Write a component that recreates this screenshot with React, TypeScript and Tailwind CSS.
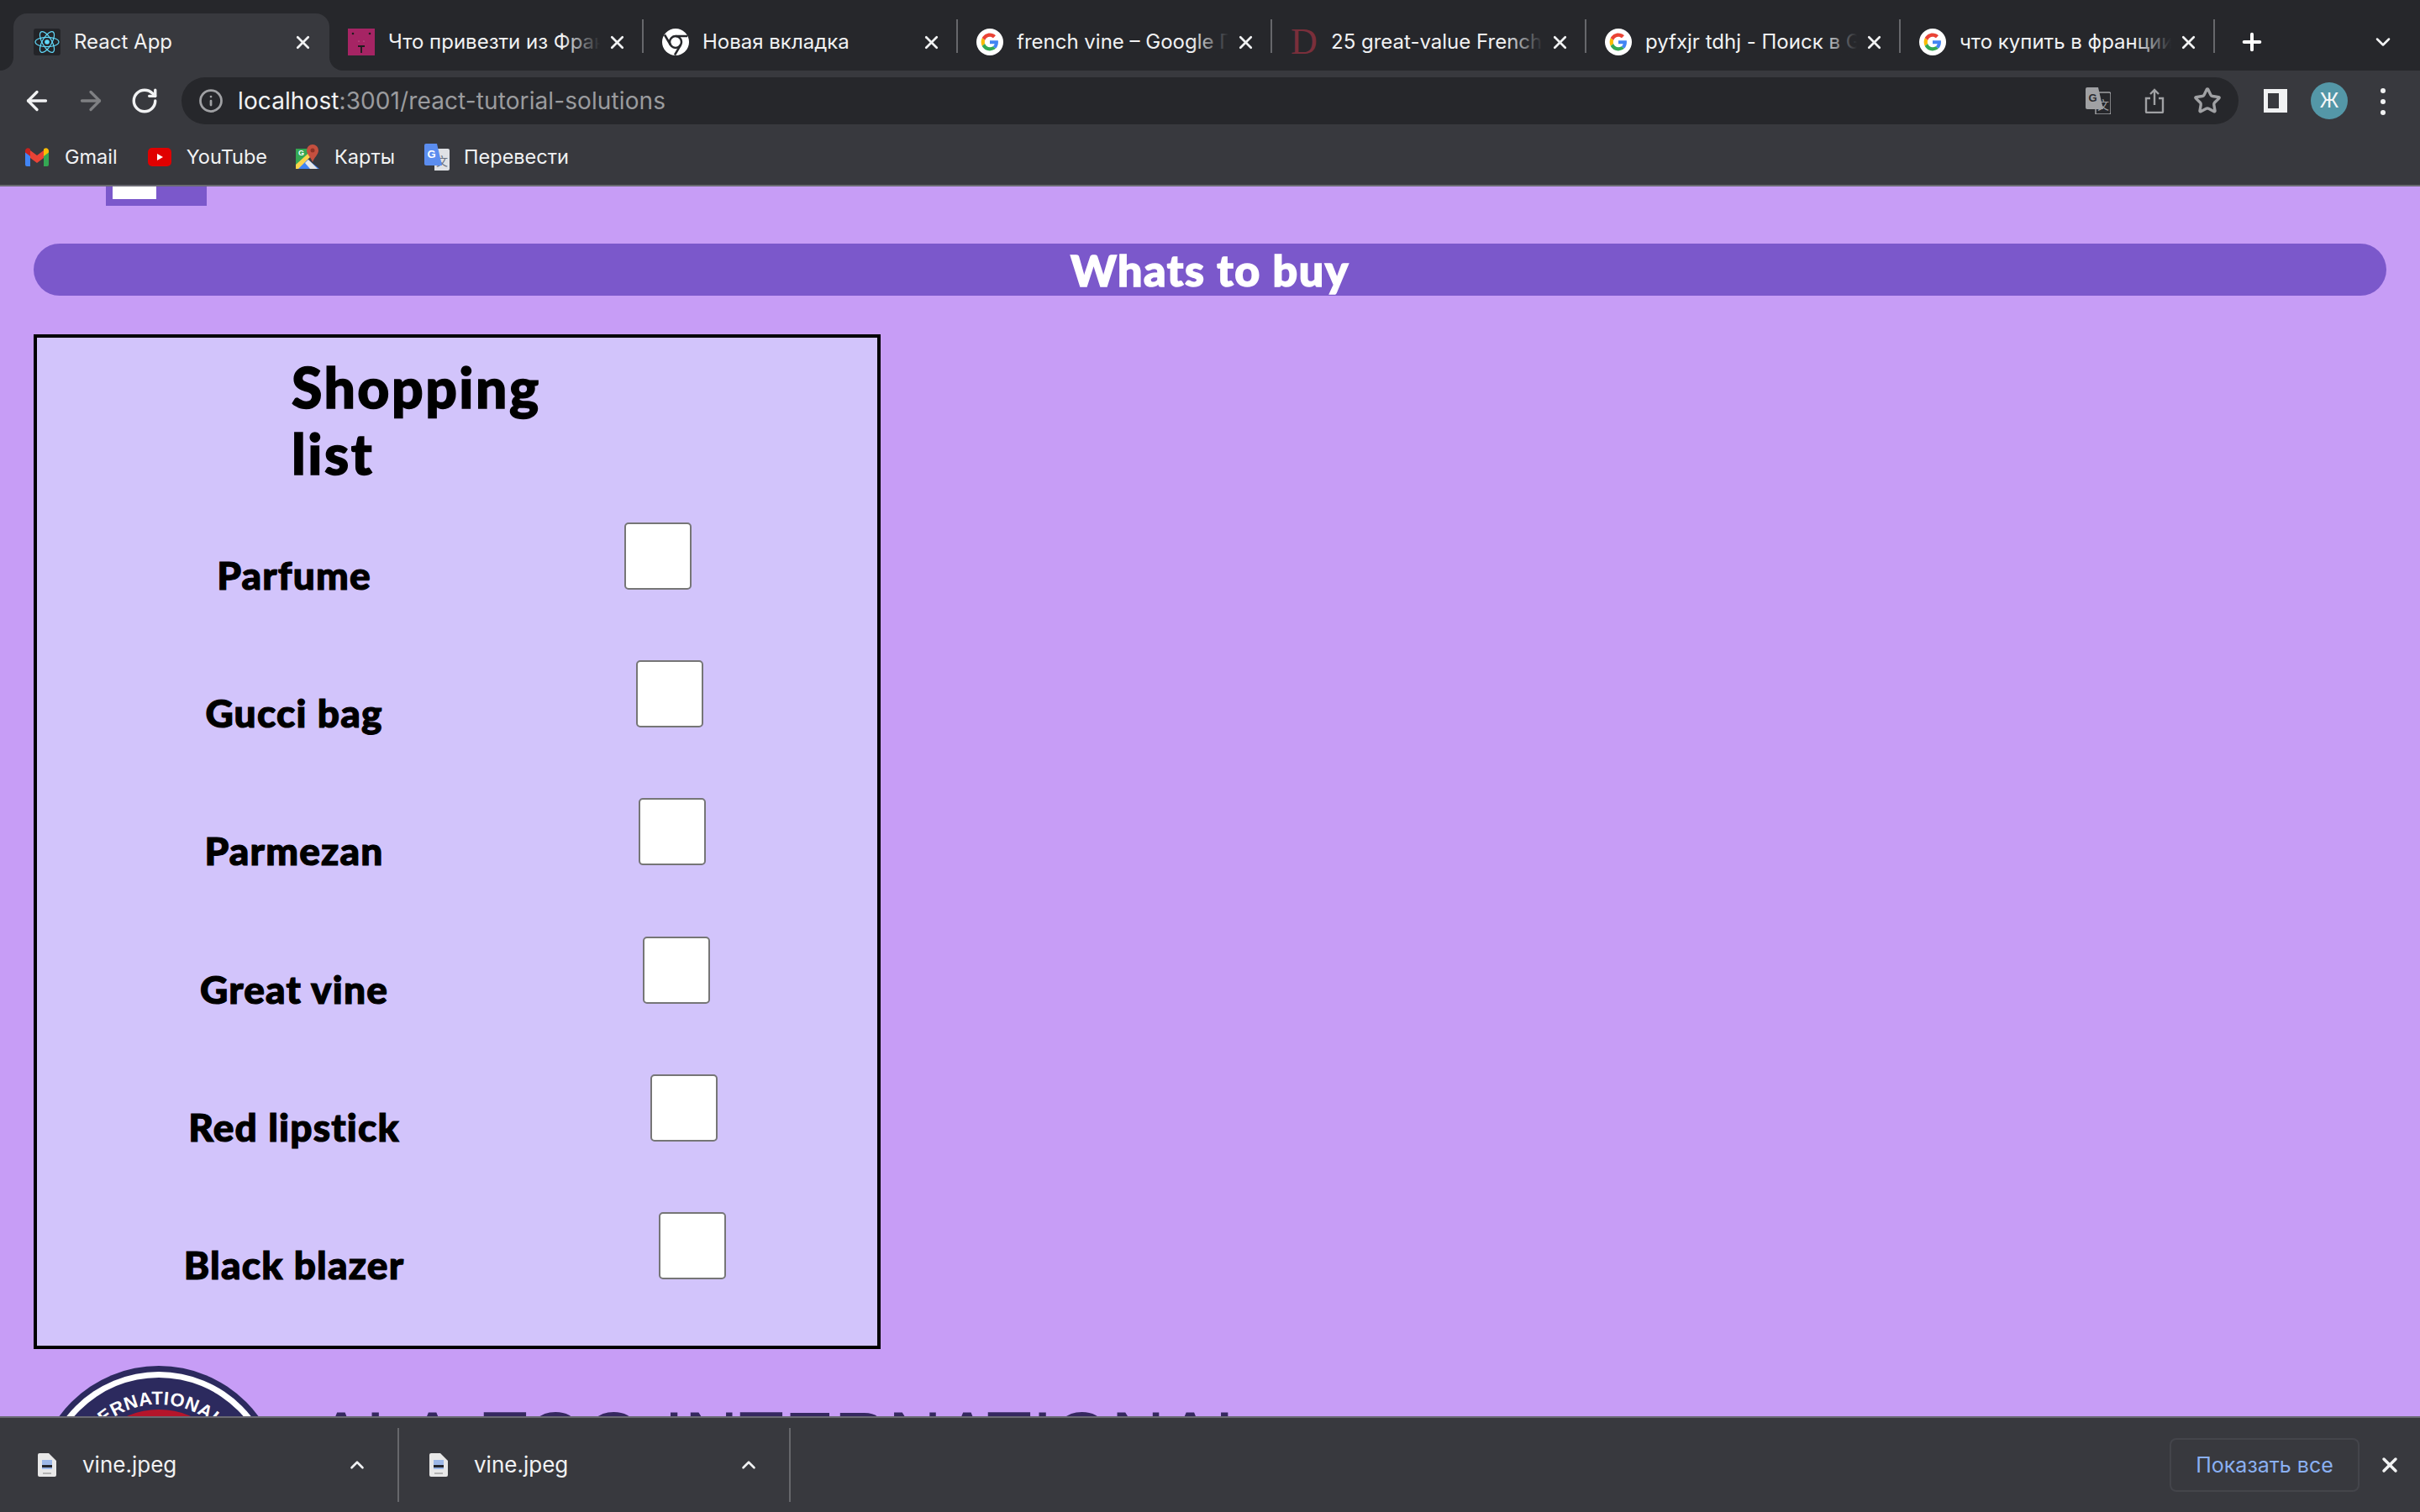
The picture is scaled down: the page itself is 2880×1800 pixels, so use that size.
import { ArrowLeft, ArrowRight, ChevronDown, ChevronUp, Info, Plus, RotateCw, Star, X } from "lucide-react";
import type { ReactNode } from "react";

function GoogleIcon() {
  return (
    <svg viewBox="0 0 32 32" className="w-8 h-8 shrink-0">
      <circle cx="16" cy="16" r="16" fill="#fff" />
      <g transform="translate(5.6 5.6) scale(0.433)">
        <path fill="#EA4335" d="M24 9.5c3.54 0 6.71 1.22 9.21 3.6l6.85-6.85C35.9 2.38 30.47 0 24 0 14.62 0 6.51 5.38 2.56 13.22l7.98 6.19C12.43 13.72 17.74 9.5 24 9.5z" />
        <path fill="#4285F4" d="M46.98 24.55c0-1.57-.15-3.09-.38-4.55H24v9.02h12.94c-.58 2.96-2.26 5.48-4.78 7.18l7.73 6c4.51-4.18 7.09-10.36 7.09-17.65z" />
        <path fill="#FBBC05" d="M10.53 28.59c-.48-1.45-.76-2.99-.76-4.59s.27-3.14.76-4.59l-7.98-6.19C.92 16.46 0 20.12 0 24c0 3.88.92 7.54 2.56 10.78l7.97-6.19z" />
        <path fill="#34A853" d="M24 48c6.48 0 11.93-2.13 15.89-5.81l-7.73-6c-2.15 1.45-4.92 2.3-8.16 2.3-6.26 0-11.57-4.22-13.47-9.91l-7.98 6.19C6.51 42.62 14.62 48 24 48z" />
      </g>
    </svg>
  );
}

function ReactIcon() {
  return (
    <svg viewBox="0 0 32 32" className="w-8 h-8 shrink-0">
      <rect width="32" height="32" rx="3" fill="#232428" />
      <g fill="none" stroke="#61dafb" strokeWidth="1.2">
        <ellipse cx="16" cy="16" rx="14" ry="5.6" />
        <ellipse cx="16" cy="16" rx="14" ry="5.6" transform="rotate(60 16 16)" />
        <ellipse cx="16" cy="16" rx="14" ry="5.6" transform="rotate(120 16 16)" />
      </g>
      <circle cx="16" cy="16" r="2.8" fill="#61dafb" />
    </svg>
  );
}

function PinkIcon() {
  return (
    <svg viewBox="0 0 32 32" className="w-8 h-8 shrink-0">
      <rect width="32" height="32" fill="#a62464" />
      <circle cx="6" cy="6" r="1.3" fill="#1d1d1d" />
      <circle cx="26" cy="6" r="1.3" fill="#1d1d1d" />
      <path d="M12 21h8M16 21v8" stroke="#1d1d1d" strokeWidth="1.8" fill="none" />
      <circle cx="13" cy="15" r="0.6" fill="#d98bb0" />
      <circle cx="19" cy="15" r="0.6" fill="#d98bb0" />
    </svg>
  );
}

function ChromeIcon() {
  return (
    <svg viewBox="0 0 32 32" className="w-8 h-8 shrink-0">
      <circle cx="16" cy="16" r="16" fill="#fff" />
      <circle cx="16" cy="16" r="7" fill="#fff" stroke="#26272b" strokeWidth="2.5" />
      <path d="M16 9h14M10 19.5 3 7.5M22 19.5l-7 12" stroke="#26272b" strokeWidth="2.5" fill="none" />
    </svg>
  );
}

function SerifIcon() {
  return (
    <span className="w-8 h-8 shrink-0 flex items-center justify-center font-['Liberation_Serif',serif] text-[44px] leading-none text-[#7a2f3b]">
      D
    </span>
  );
}

function GmailIcon() {
  return (
    <svg viewBox="0 0 28 22" className="w-7 h-[22px] shrink-0">
      <path d="M0 4v16a2 2 0 0 0 2 2h4V8z" fill="#4285f4" />
      <path d="M28 4v16a2 2 0 0 1-2 2h-4V8z" fill="#34a853" />
      <path d="M6 3v9l8 6 8-6V3l-8 6z" fill="#ea4335" />
      <path d="M0 3.5C0 .8 3 -.8 5 .8l1 .8V10L0 5.5z" fill="#c5221f" />
      <path d="M28 3.5c0-2.7-3-4.3-5-2.7l-1 .8V10l6-4.500z" fill="#fbbc04" />
    </svg>
  );
}

function YoutubeIcon() {
  return (
    <svg viewBox="0 0 28 22" className="w-7 h-[22px] shrink-0">
      <rect width="28" height="22" rx="5" fill="#e00000" />
      <path d="M11 7l7 4-7 4z" fill="#fff" />
    </svg>
  );
}

function MapsIcon() {
  return (
    <svg viewBox="0 0 28 30" className="w-7 h-[30px] shrink-0">
      <path d="M0 5h19v8L0 28z" fill="#34a853" />
      <path d="M0 28 12 16l16 13H1z" fill="#4285f4" />
      <path d="M0 24 21 5l3 3L3 29H0z" fill="#fbd44b" />
      <path d="M17 29 11 22l4-4 11 11z" fill="#e8e8e8" />
      <path d="M20 0a7 7 0 0 1 7 7c0 5-5 8-7 14-2-6-7-9-7-14a7 7 0 0 1 7-7z" fill="#c5503f" />
      <circle cx="20" cy="7" r="2.500" fill="#8f3226" />
      <text x="3" y="13" fontSize="9" fontWeight="700" fill="#fff" fontFamily="Liberation Sans">G</text>
    </svg>
  );
}

function TranslateIcon({ mono = false }: { mono?: boolean }) {
  return (
    <svg viewBox="0 0 30 32" className="w-[30px] h-8 shrink-0">
      <path d="M12 6h16a2 2 0 0 1 2 2v22a2 2 0 0 1-2 2H12z" fill={mono ? "none" : "#dfe1e5"} stroke={mono ? "#a0a1a4" : "none"} strokeWidth="1.500" />
      <text x="14" y="26" fontSize="14" fill={mono ? "#a0a1a4" : "#6b7280"} fontFamily="Noto Sans CJK SC">文</text>
      <path d="M2 0h13l6 26H2a2 2 0 0 1-2-2V2a2 2 0 0 1 2-2z" fill={mono ? "#a0a1a4" : "#5b8def"} />
      <text x="3.500" y="17" fontSize="13" fontWeight="700" fill={mono ? "#2a2b2f" : "#fff"} fontFamily="Liberation Sans">G</text>
    </svg>
  );
}

function FileIcon() {
  return (
    <svg viewBox="0 0 22 28" className="w-[22px] h-7 shrink-0">
      <path d="M2 0h11l9 9v17a2 2 0 0 1-2 2H2a2 2 0 0 1-2-2V2a2 2 0 0 1 2-2z" fill="#e8e8e8" />
      <rect x="5" y="8" width="12" height="11" fill="#9db8e8" />
      <rect x="5" y="14" width="12" height="3" fill="#23262d" />
      <rect x="6" y="23" width="10" height="2" fill="#b3b3b3" />
    </svg>
  );
}

function Logo() {
  return (
    <svg viewBox="0 0 294 294" className="w-[294px] h-[294px] shrink-0">
      <circle cx="147" cy="147" r="147" fill="#2c2a5e" />
      <circle cx="147" cy="147" r="140" fill="#fff" />
      <circle cx="147" cy="147" r="133" fill="#2c2a5e" />
      <circle cx="147" cy="147" r="95" fill="#b5152b" />
      <path id="logoArc" d="M46 147a101 101 0 0 1 202 0" fill="none" />
      <text fontSize="22" fontWeight="700" fill="#fff" fontFamily="Liberation Sans" letterSpacing="0.5" textAnchor="middle">
        <textPath href="#logoArc" startOffset="45%">INTERNATIONAL</textPath>
      </text>
    </svg>
  );
}

type TabData = { icon: ReactNode; title: string };

const tabs: TabData[] = [
  { icon: <ReactIcon />, title: "React App" },
  { icon: <PinkIcon />, title: "Что привезти из Франции" },
  { icon: <ChromeIcon />, title: "Новая вкладка" },
  { icon: <GoogleIcon />, title: "french vine – Google Поиск" },
  { icon: <SerifIcon />, title: "25 great-value French wines" },
  { icon: <GoogleIcon />, title: "pyfxjr tdhj - Поиск в Google" },
  { icon: <GoogleIcon />, title: "что купить в франции" },
];

function Tab({ tab, index }: { tab: TabData; index: number }) {
  const active = index === 0;
  const fades = tab.title.length > 13;
  return (
    <div className={active ? "relative w-[376px] h-full flex items-center pl-6 bg-[#38393e] rounded-t-[16px]" : "relative w-[374px] h-full flex items-center pl-[22px]"}>
      {tab.icon}
      <div className="relative w-[252px] ml-4 overflow-hidden whitespace-nowrap text-[24px] leading-[30px] text-[#f1f2f3]">
        {tab.title}
        {fades && <div className="absolute inset-y-0 right-0 w-11 bg-gradient-to-r from-transparent to-[#26272b]" />}
      </div>
      <X className="ml-2 shrink-0 text-[#f1f2f3]" size={25} strokeWidth={2.6} />
      {!active && <div className="absolute right-0 top-[7px] w-[2px] h-10 bg-[#66676b]" />}
      {active && (
        <>
          <div className="absolute left-[-16px] bottom-0 w-4 h-4 bg-[#38393e]">
            <div className="w-full h-full bg-[#26272b] rounded-br-[16px]" />
          </div>
          <div className="absolute right-[-16px] bottom-0 w-4 h-4 bg-[#38393e]">
            <div className="w-full h-full bg-[#26272b] rounded-bl-[16px]" />
          </div>
        </>
      )}
    </div>
  );
}

const bookmarks = [
  { icon: <GmailIcon />, label: "Gmail", cls: "ml-[30px] gap-[19px]" },
  { icon: <YoutubeIcon />, label: "YouTube", cls: "ml-[36px] gap-[18px]" },
  { icon: <MapsIcon />, label: "Карты", cls: "ml-[34px] gap-[18px]" },
  { icon: <TranslateIcon />, label: "Перевести", cls: "ml-[35px] gap-[17px]" },
];

const items = [
  { name: "Parfume", cls: "ml-[193px]" },
  { name: "Gucci bag", cls: "ml-[207px]" },
  { name: "Parmezan", cls: "ml-[210px]" },
  { name: "Great vine", cls: "ml-[215px]" },
  { name: "Red lipstick", cls: "ml-[224px]" },
  { name: "Black blazer", cls: "ml-[234px]" },
];

function DownloadItem({ cls }: { cls: string }) {
  return (
    <div className={`flex items-center h-[88px] ${cls}`}>
      <FileIcon />
      <span className="ml-[31px] w-[111px] whitespace-nowrap text-[26px] leading-[34px] text-[#f1f2f3]">vine.jpeg</span>
      <ChevronUp className="ml-[203px] text-[#f1f2f3]" size={26} strokeWidth={2.4} />
      <div className="ml-[35px] w-[2px] h-full bg-[#66676b]" />
    </div>
  );
}

export default function App() {
  return (
    <div className="w-[2880px] h-[1800px] flex flex-col overflow-hidden bg-[#c79df6] font-['Inter',sans-serif]">
      <div className="h-[84px] shrink-0 bg-[#26272b] pt-4 pl-4 flex">
        <div className="h-[68px] flex">
          {tabs.map((tab, i) => (
            <Tab key={i} tab={tab} index={i} />
          ))}
        </div>
        <Plus className="ml-[28px] mt-[18px] text-white" size={32} strokeWidth={3} />
        <ChevronDown className="ml-[126px] mt-5 text-[#f1f2f3]" size={28} strokeWidth={2.2} />
      </div>

      <div className="h-[138px] shrink-0 bg-[#38393e] border-b-2 border-[#6a6a72]">
        <div className="h-[72px] pt-2 flex items-start">
          <div className="w-[216px] h-14 flex items-center shrink-0 pl-[26px] gap-7">
            <ArrowLeft className="text-[#f1f2f3] shrink-0" size={36} strokeWidth={2.2} />
            <ArrowRight className="text-[#7f8083] shrink-0" size={36} strokeWidth={2.2} />
            <RotateCw className="text-[#f1f2f3] shrink-0 ml-px" size={34} strokeWidth={2.4} />
          </div>
          <div className="w-[2448px] h-14 rounded-full bg-[#26272b] flex items-center pl-5 pr-5">
            <Info className="text-[#a0a1a4]" size={30} strokeWidth={2.2} />
            <span className="ml-[17px] text-[28px] leading-none tracking-[0.1px] text-[#f1f2f3]">
              localhost<span className="text-[#9a9b9e]">:3001/react-tutorial-solutions</span>
            </span>
            <div className="ml-auto flex items-center gap-[37px]">
              <TranslateIcon mono />
              <svg viewBox="0 0 24 30" fill="none" stroke="#a0a1a4" strokeWidth="2.400" className="w-6 h-[30px] ml-[3px]">
                <path d="M12 20V2M7 7l5-5 5 5M7 12H2v16a1 1 0 0 0 1 1h18a1 1 0 0 0 1-1V12h-5" />
              </svg>
              <Star className="text-[#a0a1a4] -ml-[3px]" size={34} strokeWidth={2.4} />
            </div>
          </div>
          <div className="ml-[30px] w-7 h-7 mt-[14px] border-[5px] border-r-[10px] border-[#f1f2f3] bg-[#38393e] shrink-0" />
          <div className="ml-7 w-11 h-11 mt-1.5 rounded-full bg-[#5497a7] text-[#f4f6f7] text-[24px] flex items-center justify-center shrink-0">
            Ж
          </div>
          <div className="ml-[39px] mt-[13px] flex flex-col gap-[7px] shrink-0">
            <div className="w-[6px] h-[6px] rounded-full bg-[#f1f2f3]" />
            <div className="w-[6px] h-[6px] rounded-full bg-[#f1f2f3]" />
            <div className="w-[6px] h-[6px] rounded-full bg-[#f1f2f3]" />
          </div>
        </div>
        <div className="h-[62px] flex items-center">
          {bookmarks.map((b) => (
            <div key={b.label} className={`flex items-center ${b.cls}`}>
              {b.icon}
              <span className="text-[23.5px] leading-none text-[#f1f2f3]">{b.label}</span>
            </div>
          ))}
        </div>
      </div>

      <main className="flex-1 overflow-hidden font-['Lato',sans-serif]">
        <div className="h-[23px] ml-[126px] w-[120px] bg-[#7b58cb]">
          <div className="ml-2 w-[52px] h-[15px] bg-white" />
        </div>
        <h2 className="mt-[45px] mx-10 h-[62px] rounded-[31px] bg-[#7b58cb] text-white text-center text-[52px] leading-[62px] tracking-[1.500px] font-black [-webkit-text-stroke:1.5px_white]">
          Whats to buy
        </h2>
        <section className="mt-[46px] ml-10 w-[1008px] h-[1208px] border-4 border-black bg-[#d2c4fb]">
          <h3 className="mt-[19px] ml-[303px] w-[320px] text-[66px] leading-[79px] tracking-[2.500px] font-black text-black [-webkit-text-stroke:1.5px_black]">
            Shopping list
          </h3>
          <ul className="mt-[43px] flex flex-col gap-[84.2px]">
            {items.map((item) => (
              <li key={item.name} className="h-20 flex items-baseline ml-[106px]">
                <span className="w-[400px] text-center text-[46px] leading-none tracking-[1.200px] font-black text-black [-webkit-text-stroke:1.2px_black]">
                  {item.name}
                </span>
                <input
                  type="checkbox"
                  className={`appearance-none w-20 h-20 m-0 shrink-0 bg-white border-2 border-[#767676] rounded-[5px] ${item.cls}`}
                />
              </li>
            ))}
          </ul>
        </section>
        <div className="mt-5 ml-[42px] flex items-start gap-10">
          <Logo />
          <div className="mt-[42px] whitespace-nowrap font-['Liberation_Sans',sans-serif] text-[89px] leading-none text-[#35285f]">
            ALA-TOO INTERNATIONAL
          </div>
        </div>
      </main>

      <div className="h-[114px] shrink-0 bg-[#38393e] border-t-2 border-[#6a6a72] flex items-center">
        <DownloadItem cls="ml-[45px]" />
        <DownloadItem cls="ml-[36px]" />
        <button className="ml-auto w-[226px] h-16 rounded-lg border-2 border-[#44454b] text-[25px] leading-none text-[#8ab0f2]">
          Показать все
        </button>
        <X className="ml-[22px] mr-[22px] text-[#f1f2f3]" size={28} strokeWidth={3} />
      </div>
    </div>
  );
}
